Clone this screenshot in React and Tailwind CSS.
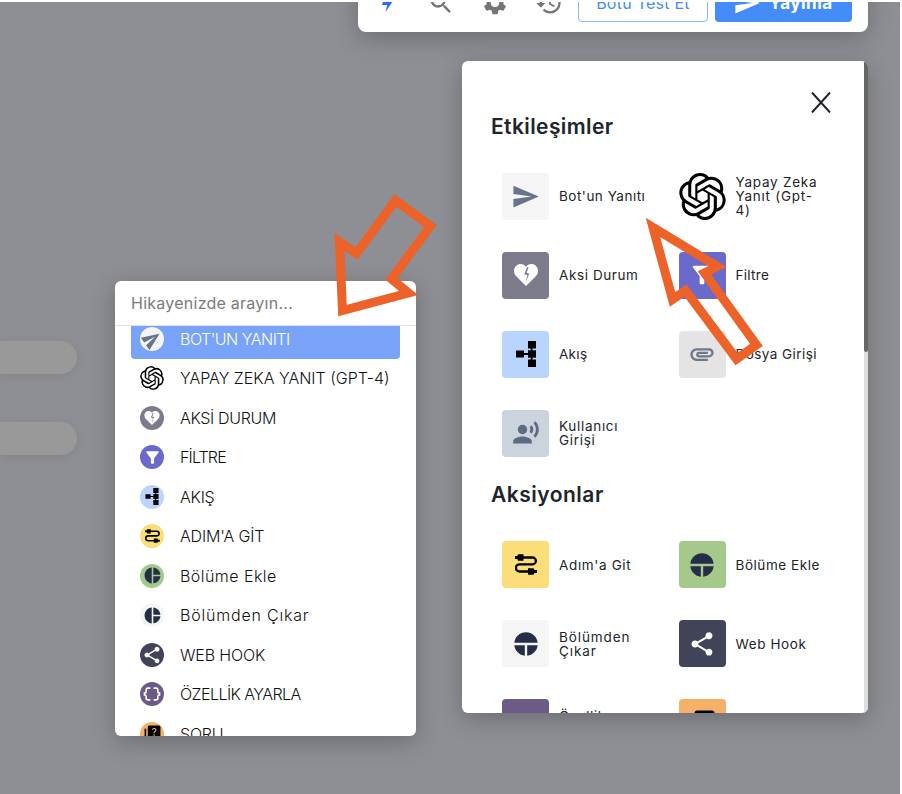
import React from "react";
import { MdSend, MdFilterAlt, MdAttachment, MdRecordVoiceOver, MdShare, MdDataObject, MdQuiz, MdSearch, MdSettings, MdHistory, MdPieChart } from "react-icons/md";
import { SiOpenai } from "react-icons/si";

const HeartIcon = ({ className }) => (
  <svg viewBox="0 0 24 22" className={className}>
    <path fill="#fff" d="M12 22 2 12C-.7 9-.7 4.500 2 2 4.800-.7 9-.5 11.500 2.200L12 2.700l.5-.5C15-.5 19.200-.7 22 2c2.700 2.500 2.700 7 0 10z" />
    <path fill="#7c7b8b" d="M13.200 3 10.200 10.200l3.200.8L11.800 18.500 15.200 9.600 12.400 8.900 14.600 3.600z" />
  </svg>
);

const FlowIcon = ({ className }) => (
  <svg viewBox="0 0 20 26" className={className}>
    <path fill="none" stroke="#000" strokeWidth="1.800" d="M4 13h12M15.600 4v18" />
    <path d="M0 9.500h8v7H0zM12 0h8v7.500h-8zM12 9.300h8v7.500h-8zM12 18.500h8V26h-8z" />
  </svg>
);

const StepIcon = ({ className }) => (
  <svg viewBox="0 0 22 21" className={className}>
    <path fill="none" stroke="#000" strokeWidth="2.300" d="M6 3.500h11.500a3.400 3.400 0 0 1 0 6.800H4.500a3.500 3.500 0 0 0 0 7.200h11" />
    <path d="M3 .3h5.500v6.400H3L2.300 5H0V2h2.300zM13 14.300h5.500l.9 1.700H22v3h-2.600l-.9 1.700H13z" />
  </svg>
);

const FlashIcon = ({ className }) => (
  <svg viewBox="0 0 12 22" className={className}>
    <path fill="currentColor" d="M4 0h8L11 9.500h1L3.500 22 5.200 15H0z" />
  </svg>
);

const panelTop = [
  { label: ["Bot'un Yanıtı"], bg: "bg-[#f5f5f5]", icon: <MdSend className="size-[29px] text-[#677489]" />, track: "tracking-[0.5px]" },
  { label: ["Yapay Zeka", "Yanıt (Gpt-", "4)"], bg: "bg-white", icon: <SiOpenai className="size-[47px] text-black" />, track: "tracking-[0.75px]" },
  { label: ["Aksi Durum"], bg: "bg-[#7c7b8b]", icon: <HeartIcon className="h-[22px] w-6" />, track: "tracking-[0.6px]" },
  { label: ["Filtre"], bg: "bg-[#6a69cc]", icon: <MdFilterAlt className="size-7 text-white" />, track: "tracking-[0.3px]" },
  { label: ["Akış"], bg: "bg-[#b9d4fd]", icon: <FlowIcon className="h-[26px] w-5" />, track: "tracking-[0.3px]" },
  { label: ["Dosya Girişi"], bg: "bg-[#e5e3e4]", icon: <MdAttachment className="size-7 text-[#6d798b]" />, track: "tracking-[0.45px]" },
  { label: ["Kullanıcı", "Girişi"], bg: "bg-[#cbd3dd]", icon: <MdRecordVoiceOver className="size-7 text-[#5d6b82]" />, track: "tracking-[0.7px]" },
];

const panelBottom = [
  { label: ["Adım'a Git"], bg: "bg-[#fbde7a]", icon: <StepIcon className="h-[21px] w-[22px]" />, track: "tracking-[0.65px]" },
  { label: ["Bölüme Ekle"], bg: "bg-[#a5c98a]", icon: <MdPieChart className="size-7 rotate-90 text-[#252d49]" />, track: "tracking-[0.55px]" },
  { label: ["Bölümden", "Çıkar"], bg: "bg-[#f5f5f5]", icon: <MdPieChart className="size-7 rotate-90 text-[#252d49]" />, track: "tracking-[0.9px]" },
  { label: ["Web Hook"], bg: "bg-[#414459]", icon: <MdShare className="size-7 text-white" />, track: "tracking-[0.6px]" },
  { label: ["Özellik", "Ayarla"], bg: "bg-[#6c5b87]", icon: <MdDataObject className="size-[26px] translate-y-px text-white" />, track: "tracking-[0.6px]" },
  { label: ["Soru"], bg: "bg-[#f5b06a]", icon: <MdQuiz className="size-[30px] text-black" />, track: "tracking-[0.6px]" },
];

const menu = [
  { label: "BOT'UN YANITI", bg: "bg-[#f5f5f5]", active: true, icon: <MdSend className="size-5 -rotate-[35deg] text-[#677489]" />, track: "tracking-[-0.5px]" },
  { label: "YAPAY ZEKA YANIT (GPT-4)", bg: "bg-white", icon: <SiOpenai className="size-6 text-black" />, track: "" },
  { label: "AKSİ DURUM", bg: "bg-[#7c7b8b]", icon: <HeartIcon className="h-[14px] w-4" />, track: "tracking-[-0.35px]" },
  { label: "FİLTRE", bg: "bg-[#6a69cc]", icon: <MdFilterAlt className="size-[19px] text-white" />, track: "tracking-[-0.85px]" },
  { label: "AKIŞ", bg: "bg-[#b9d4fd]", icon: <FlowIcon className="h-[17px] w-[14px]" />, track: "tracking-[-0.25px]" },
  { label: "ADIM'A GİT", bg: "bg-[#fbde7a]", icon: <StepIcon className="h-[14px] w-[15px]" />, track: "tracking-[-0.15px]" },
  { label: "Bölüme Ekle", bg: "bg-[#a5c98a]", icon: <MdPieChart className="size-[19px] text-[#252d49]" />, track: "tracking-[0.45px]" },
  { label: "Bölümden Çıkar", bg: "bg-[#f5f5f5]", icon: <MdPieChart className="size-[19px] text-[#252d49]" />, track: "tracking-[0.8px]" },
  { label: "WEB HOOK", bg: "bg-[#414459]", icon: <MdShare className="size-5 text-white" />, track: "tracking-[-0.15px]" },
  { label: "ÖZELLİK AYARLA", bg: "bg-[#6c5b87]", icon: <MdDataObject className="size-5 text-white" />, track: "tracking-[-0.55px]" },
  { label: "SORU", bg: "bg-[#f5b06a]", icon: <MdQuiz className="size-[19px] text-black" />, track: "tracking-[-0.2px]" },
];

const Tile = ({ item }) => (
  <div className="flex h-[47px] items-center gap-2.5">
    <div className={`flex h-[47px] w-[47px] shrink-0 items-center justify-center overflow-hidden rounded ${item.bg}`}>{item.icon}</div>
    <div className={`text-[13.5px] leading-[14px] whitespace-nowrap text-[#212529] ${item.track}`}>
      {item.label.map((line) => <div key={line}>{line}</div>)}
    </div>
  </div>
);

const Section = ({ title, items, track, gap }) => (
  <section>
    <h2 className={`text-[21px] leading-6 font-semibold text-[#212529] ${track}`}>{title}</h2>
    <div className={`ml-[11px] grid grid-cols-[176.5px_1fr] gap-y-8 ${gap}`}>
      {items.map((item) => <Tile key={item.label[0]} item={item} />)}
    </div>
  </section>
);

export default function App() {
  return (
    <div className="relative h-[794px] w-[902px] overflow-hidden bg-white pt-0.5 pr-0.5 font-[Inter,'Noto_Sans',sans-serif]">
      <main className="relative h-[792px] w-[900px] overflow-hidden bg-[#8e8f94]">
        <div className="flex w-[77px] flex-col gap-12 pt-[339px]">
          <div className="h-[33px] rounded-r-full bg-[#999] shadow-[0_2px_10px_rgba(0,0,0,0.08)]" />
          <div className="h-[33px] rounded-r-full bg-[#999] shadow-[0_2px_10px_rgba(0,0,0,0.08)]" />
        </div>

        <header className="absolute -top-[31.5px] left-[358px] flex h-[61px] w-[510px] items-end rounded-lg bg-white pb-[9.5px] shadow-[0_6px_24px_rgba(0,0,0,0.24)]">
          <div className="mb-[5px] flex w-[220px] items-center pl-6 text-[#757575]">
            <FlashIcon className="mr-[33px] h-[22px] w-3 translate-y-[-2px] text-[#2f6bff]" />
            <MdSearch className="mr-[26px] size-7" />
            <MdSettings className="mr-[26px] size-7" />
            <MdHistory className="size-7" />
          </div>
          <div className="flex h-[37px] w-[130px] items-center justify-center rounded border border-[#82b8ff] pb-0.5 text-base tracking-[0.25px] text-[#448df9]">Botu Test Et</div>
          <div className="ml-[7px] flex h-[37px] w-[137px] items-center gap-2 rounded bg-[#448df9] pl-[18px] text-[17px] font-bold tracking-[0.5px] text-white">
            <MdSend className="size-7 shrink-0 -translate-y-px" />Yayınla
          </div>
        </header>

        <aside className="absolute top-[58.5px] left-[462px] h-[652.5px] w-[406px] overflow-hidden rounded-md bg-white shadow-[0_6px_24px_rgba(0,0,0,0.24)]">
          <div className="flex">
            <div className="h-[653px] w-[402px] overflow-hidden pl-[29px]">
              <div className="flex h-[54.5px] items-end justify-end pr-[33px] pb-[2px]">
                <svg viewBox="0 0 20 21" className="h-[21px] w-5"><path d="M1 .5l18 20M19 .5 1 20.500" stroke="#212529" strokeWidth="2" fill="none" /></svg>
              </div>
              <Section title="Etkileşimler" items={panelTop} track="tracking-[0.4px]" gap="mt-[33.5px]" />
              <div className="h-[26px]" />
              <Section title="Aksiyonlar" items={panelBottom} track="tracking-[0.5px]" gap="mt-[34.5px]" />
            </div>
            <div className="h-[653px] w-1 bg-[#dedede]"><div className="h-[291px] w-full rounded bg-[#666]" /></div>
          </div>
        </aside>

        <div className="absolute top-[279px] left-[115px] h-[455px] w-[301px] overflow-hidden rounded-md bg-white shadow-[0_6px_24px_rgba(0,0,0,0.24)]">
          <div className="flex h-[45px] items-center border-b border-[#e2e2e2] pl-4 text-base tracking-[0.25px] text-[#7b7b7b]">Hikayenizde arayın...</div>
          <div className="h-[410px] overflow-hidden px-4">
            <ul className="-mt-[7px]">
              {menu.map((item) => (
                <li key={item.label} className={`flex h-[39.5px] items-center rounded pl-[9px] ${item.active ? "bg-[#78a3f8] text-white" : "text-[#111]"}`}>
                  <span className={`flex size-6 items-center justify-center overflow-hidden rounded-full ${item.bg}`}>{item.icon}</span>
                  <span className={`ml-4 text-base font-light whitespace-nowrap ${item.track}`}>{item.label}</span>
                </li>
              ))}
            </ul>
          </div>
        </div>

        <svg viewBox="0 2 900 792" className="pointer-events-none absolute inset-0 h-[792px] w-[900px]">
          <g fill="none" stroke="#ec6228" strokeWidth="9" strokeMiterlimit="10">
            <path d="M339.500 242 356.500 253.500 395.500 200.500 430.500 226 391.500 279 408.500 293 342.500 310.500z" />
            <path d="M653 227.500 672.500 299.500 685.500 290.500 736.500 359 756.500 345 704.500 273 717.500 266.500z" />
          </g>
        </svg>
      </main>
    </div>
  );
}
